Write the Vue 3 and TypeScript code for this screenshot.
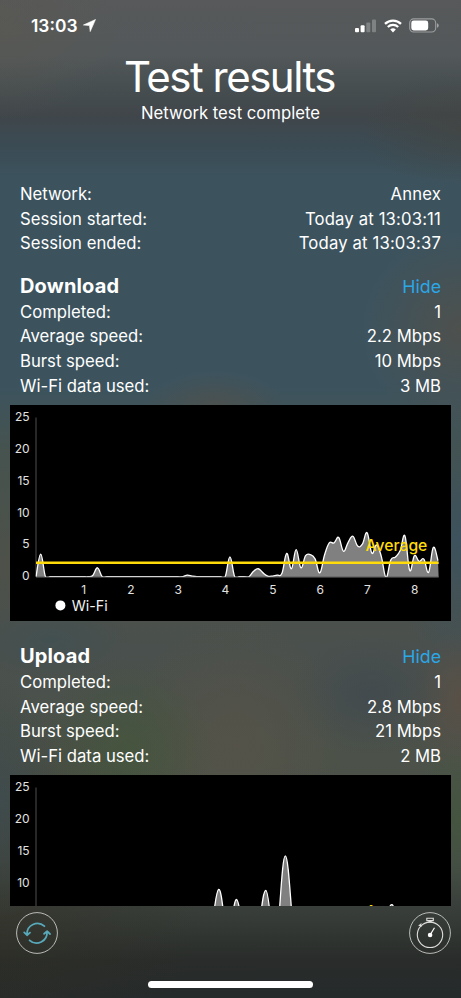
<script setup lang="ts">
type Point = [x: number, mbps: number]

interface Chart {
  id: string
  average: number
  points: Point[]
  levels: number[]
  ticks: { x: number; label: string }[]
  legend: string
}

interface Section {
  title: string
  rows: [label: string, value: string][]
  chart: Chart
}

const session: [string, string][] = [
  ['Network:', 'Annex'],
  ['Session started:', 'Today at 13:03:11'],
  ['Session ended:', 'Today at 13:03:37'],
]

const LEFT = 26
const RIGHT = 428.7
const BASE = 171.7
const UNIT = 6.37
const SECOND = 47.3

const yAt = (mbps: number): number => BASE - mbps * UNIT

// Samples taken every tenth of a second; missing indices are idle.
const downloadSamples: Record<number, number> = {
  1: 3.55, 12: 0.2, 13: 1.4, 32: 0.25, 33: 0.1, 41: 3.1,
  46: 0.85, 47: 1.25, 48: 0.6, 49: 0.1, 50: 0.1, 51: 0.25, 52: 0.55,
  53: 3.65, 54: 1.25, 55: 4.25, 56: 1.4, 57: 3.3, 58: 3.45, 59: 2.8, 60: 0.6,
  61: 3.4, 62: 5.3, 63: 5.3, 64: 6.15, 65: 4, 66: 5.4, 67: 6.35, 68: 4.8, 69: 5.1,
  70: 6.9, 71: 3.7, 72: 5, 73: 3.2, 74: -0.1, 75: 2.6, 76: 3.1, 77: 4.1, 78: 6.4,
  79: 1, 80: 3.3, 81: 2.4, 82: 2.75, 83: 0.7, 84: 4.6, 85: 2.5,
}

const downloadPoints: Point[] = Array.from({ length: 86 }, (_, i): Point => [
  LEFT + (i * SECOND) / 10,
  downloadSamples[i] ?? 0,
])

const uploadPoints: Point[] = [
  [26, 0], [180, 0], [189.3, 0], [199, 0.5], [208.7, 9], [218, 1.5], [226.6, 7.4],
  [236, 0.5], [246, 0.5], [255.8, 8.85], [265.5, 0.5], [275.3, 14.25], [285.2, 0.5],
  [295, 0.5], [350, 3], [372, 3], [382, 6.6], [392, 2], [410, 2], [428.7, 3],
]

const seconds = Array.from({ length: 8 }, (_, i) => ({
  x: LEFT + (i + 1) * SECOND,
  label: String(i + 1),
}))

const sections: Section[] = [
  {
    title: 'Download',
    rows: [
      ['Completed:', '1'],
      ['Average speed:', '2.2 Mbps'],
      ['Burst speed:', '10 Mbps'],
      ['Wi-Fi data used:', '3 MB'],
    ],
    chart: {
      id: 'download',
      average: 2.2,
      points: downloadPoints,
      levels: [25, 20, 15, 10, 5, 0],
      ticks: seconds,
      legend: 'Wi-Fi',
    },
  },
  {
    title: 'Upload',
    rows: [
      ['Completed:', '1'],
      ['Average speed:', '2.8 Mbps'],
      ['Burst speed:', '21 Mbps'],
      ['Wi-Fi data used:', '2 MB'],
    ],
    chart: {
      id: 'upload',
      average: 2.84,
      points: uploadPoints,
      levels: [25, 20, 15, 10],
      ticks: [],
      legend: '',
    },
  },
]

function curve(points: Point[]): string {
  const p = points.map(([x, v]) => [x, yAt(v)])
  const k = 0.2
  let d = `M${p[0][0]} ${p[0][1]}`
  for (let i = 0; i < p.length - 1; i++) {
    const a = p[Math.max(i - 1, 0)]
    const b = p[i]
    const c = p[i + 1]
    const e = p[Math.min(i + 2, p.length - 1)]
    const c1 = [b[0] + (c[0] - a[0]) * k, b[1] + (c[1] - a[1]) * k]
    const c2 = [c[0] - (e[0] - b[0]) * k, c[1] - (e[1] - b[1]) * k]
    d += `C${[...c1, ...c2, ...c].map((n) => n.toFixed(2)).join(' ')}`
  }
  return d
}

const area = (points: Point[]): string => `${curve(points)}L${RIGHT} ${BASE}L${LEFT} ${BASE}Z`
</script>

<template>
  <div class="screen">
    <div class="status">
      <div class="clock">
        <span>13:03</span>
        <svg width="13" height="13" viewBox="0 0 13 13"><path d="M12.5 .5 7.2 12.6 6.5 6.6.4 6z" fill="#fff" stroke="#fff" stroke-width=".6" stroke-linejoin="round" /></svg>
      </div>
      <div class="indicators">
        <svg width="22" height="14" viewBox="0 0 22 14" fill="#fff">
          <rect x="0" y="8.9" width="4" height="4.3" rx="1" />
          <rect x="5.6" y="6.3" width="4" height="6.9" rx="1" />
          <rect x="11.3" y="3.4" width="4" height="9.8" rx="1" opacity=".25" />
          <rect x="17" y=".4" width="4" height="12.8" rx="1" opacity=".25" />
        </svg>
        <svg width="18" height="14" viewBox="0 0 18 14" fill="none" stroke="#fff">
          <path d="M1 4.9a11.6 11.6 0 0 1 16 0" stroke-width="2.3" />
          <path d="M3.8 8a7.5 7.5 0 0 1 10.4 0" stroke-width="2.2" />
          <path d="M9 13.5 6.2 10.6a4.1 4.1 0 0 1 5.6 0z" fill="#fff" stroke="none" />
        </svg>
        <svg width="30" height="15" viewBox="0 0 30 15">
          <rect x=".7" y=".9" width="26" height="13.1" rx="4" fill="none" stroke="#fff" stroke-opacity=".42" stroke-width="1.1" />
          <rect x="2.3" y="2.5" width="16.9" height="9.9" rx="2.4" fill="#fff" />
          <path d="M28 5.2q1.7.6 1.7 2.2T28 9.7z" fill="#fff" opacity=".45" />
        </svg>
      </div>
    </div>

    <header class="heading">
      <h1>Test results</h1>
      <p>Network test complete</p>
    </header>

    <main class="results">
      <dl class="rows session">
        <div v-for="[label, value] in session" :key="label" class="row">
          <dt>{{ label }}</dt>
          <dd>{{ value }}</dd>
        </div>
      </dl>

      <section v-for="s in sections" :key="s.title" class="section">
        <div class="section-head">
          <h2>{{ s.title }}</h2>
          <button class="hide">Hide</button>
        </div>
        <dl class="rows">
          <div v-for="[label, value] in s.rows" :key="label" class="row">
            <dt>{{ label }}</dt>
            <dd>{{ value }}</dd>
          </div>
        </dl>
        <svg class="chart" width="441" height="216.3" viewBox="0 0 441 216.3">
          <clipPath :id="s.chart.id"><rect :x="LEFT - 0.5" y="0" :width="RIGHT - LEFT + 0.7" :height="BASE + 0.1" /></clipPath>
          <g class="axis-label" text-anchor="end">
            <text v-for="n in s.chart.levels" :key="n" x="19.6" :y="yAt(n) + 3.6">{{ n }}</text>
          </g>
          <g class="axis-label" text-anchor="middle">
            <text v-for="t in s.chart.ticks" :key="t.label" :x="t.x + 0.3" y="188.8">{{ t.label }}</text>
          </g>
          <path :d="`M${LEFT} 12.4V${BASE}`" stroke="#424242" stroke-width="1.2" />
          <path :d="`M${LEFT} ${BASE + 0.2}H${RIGHT}`" stroke="#8a8a8a" stroke-width="1" />
          <g :clip-path="`url(#${s.chart.id})`">
            <path :d="area(s.chart.points)" fill="#808080" />
            <path :d="curve(s.chart.points)" fill="none" stroke="#fff" stroke-width="1.3" />
          </g>
          <path :d="`M${LEFT} ${yAt(s.chart.average)}H${RIGHT}`" stroke="#ffdc0a" stroke-width="2.4" />
          <text class="average" x="355.5" :y="yAt(s.chart.average) - 12">Average</text>
          <template v-if="s.chart.legend">
            <circle cx="50.4" cy="200.4" r="5" fill="#fff" />
            <text class="legend" x="61.7" y="205.6">{{ s.chart.legend }}</text>
          </template>
        </svg>
      </section>
    </main>

    <footer class="footer">
      <div class="actions">
        <button aria-label="Repeat test">
          <svg width="42" height="42" viewBox="0 0 42 42" fill="none">
            <circle cx="21" cy="21" r="20.4" stroke="#c9cbc8" stroke-width=".9" />
            <g stroke="#58a9b9" stroke-width="1.8" stroke-linecap="round" stroke-linejoin="round">
              <path d="M28.4 14.2A10.4 10.4 0 0 0 11 22.5M8.2 20.4 11 23.2 14 20.6" />
              <path d="M13.6 28.3A10.4 10.4 0 0 0 31 19.8M28.1 21.8 31.1 19.2 34 22" />
            </g>
          </svg>
        </button>
        <button aria-label="Timer">
          <svg width="42" height="42" viewBox="0 0 42 42" fill="none" stroke="#dededc">
            <circle cx="21" cy="21" r="20.4" stroke="#c9cbc8" stroke-width=".9" />
            <circle cx="21" cy="22.8" r="12.7" stroke-width="1.1" />
            <path d="M17.8 6.3h6.5v2.3h-6.5zM21 8.8v1.4M19.4 9.9h3.3M9.7 13.9l2.8-2.3M12.4 14.6l-1.4-1.8" stroke-width="1.1" />
            <path d="M21.2 22.7 25.5 15.8" stroke="#fff" stroke-width="1.2" />
            <circle cx="21.1" cy="23" r="2.3" fill="#fff" stroke="none" />
          </svg>
        </button>
      </div>
      <div class="home"></div>
    </footer>
  </div>
</template>

<style>
body {
  background: #262b2c;
}
</style>

<style scoped>
.screen {
  width: 461px;
  height: 998px;
  box-sizing: border-box;
  overflow: hidden;
  display: flex;
  flex-direction: column;
  color: #fff;
  font-family: Inter, "Liberation Sans", sans-serif;
  background:
    radial-gradient(ellipse 100px 60px at 461px 130px, rgba(70, 68, 60, .5), transparent),
    radial-gradient(ellipse 120px 90px at 0 30px, rgba(90, 88, 80, .6), transparent),
    radial-gradient(ellipse 85px 90px at 128px 750px, rgba(66, 86, 56, .65), transparent),
    radial-gradient(ellipse 110px 130px at 235px 745px, rgba(88, 83, 72, .7), transparent),
    radial-gradient(ellipse 80px 60px at 370px 695px, rgba(64, 73, 79, .8), transparent),
    radial-gradient(ellipse 50px 70px at 461px 700px, rgba(92, 80, 70, .8), transparent),
    radial-gradient(ellipse 50px 80px at 461px 820px, rgba(66, 86, 60, .7), transparent),
    radial-gradient(ellipse 60px 120px at 0 800px, rgba(62, 76, 80, .8), transparent),
    radial-gradient(ellipse 100px 100px at 461px 330px, rgba(84, 80, 72, .75), transparent),
    radial-gradient(ellipse 70px 35px at 215px 405px, rgba(84, 80, 72, .6), transparent),
    radial-gradient(ellipse 70px 130px at 461px 540px, rgba(58, 82, 96, .9), transparent),
    radial-gradient(ellipse 80px 40px at 50px 640px, rgba(62, 80, 84, .6), transparent),
    radial-gradient(ellipse 200px 200px at 0 900px, rgba(50, 48, 36, .5), transparent),
    linear-gradient(#57595a 0, #53585a 55px, #474f51 85px, #40464a 115px, #3b4b54 145px, #3c535e 180px, #3c535e 385px, #46534f 450px, #4d5149 560px, #4a504d 650px, #4c5249 760px, #464d47 860px, #343935 925px, #292c2a 960px, #252a2b 998px);
}

.status {
  height: 50px;
  flex: none;
  box-sizing: border-box;
  padding: 1px 22.5px 0 31px;
  display: flex;
  align-items: center;
  justify-content: space-between;
}

.clock,
.indicators {
  display: flex;
  align-items: center;
}

.clock {
  gap: 5.5px;
  font-size: 17.4px;
  font-weight: 600;
}

.indicators {
  gap: 6.7px;
}

.heading {
  height: 132.3px;
  flex: none;
  text-align: center;
}

h1,
h2,
p,
dl,
dd {
  margin: 0;
}

h1 {
  padding-right: 2px;
  font-size: 42px;
  line-height: 53px;
  font-weight: 400;
  letter-spacing: -1.5px;
}

p {
  font-size: 16.7px;
  line-height: 21px;
}

.results {
  height: 723.7px;
  flex: none;
  overflow: hidden;
}

.rows {
  padding: 0 20px;
}

.row {
  display: flex;
  justify-content: space-between;
  height: 24.6px;
  line-height: 24.6px;
  font-size: 16.7px;
}

.session dd {
  letter-spacing: .15px;
}

.section {
  padding-top: 16.4px;
}

.section + .section {
  padding-top: 21.4px;
}

.section-head {
  height: 27.4px;
  padding: 0 20px;
  display: flex;
  align-items: center;
  justify-content: space-between;
}

h2 {
  font-size: 20px;
  font-weight: 700;
  letter-spacing: .15px;
}

button {
  padding: 0;
  border: 0;
  background: none;
  font: inherit;
}

.hide {
  padding-top: 1px;
  color: #2ba7e6;
  font-size: 17.8px;
}

.chart {
  display: block;
  margin: 6.7px 10px 0;
  background: #000;
}

.axis-label {
  fill: #e2e2e2;
  font-size: 12px;
}

.average {
  fill: #ffdc0a;
  font-size: 15.7px;
  font-weight: 500;
}

.legend {
  fill: #f2f2f2;
  font-size: 14.3px;
}

.footer {
  flex: 1;
  display: flex;
  flex-direction: column;
}

.actions {
  padding: 6.2px 10px 0 15.6px;
  display: flex;
  justify-content: space-between;
}

.actions svg {
  display: block;
}

.home {
  width: 165px;
  height: 6.5px;
  margin: 27px auto 0;
  border-radius: 4px;
  background: #fff;
}
</style>
